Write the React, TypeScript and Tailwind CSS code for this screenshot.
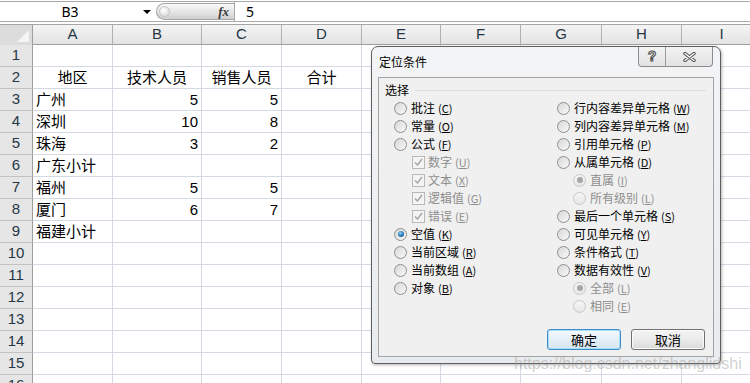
import React from "react";

const cols = [
  { key: "A", w: "w-[80px]" },
  { key: "B", w: "w-[89px]" },
  { key: "C", w: "w-[80px]" },
  { key: "D", w: "w-[80px]" },
  { key: "E", w: "w-[79px]" },
  { key: "F", w: "w-[80px]" },
  { key: "G", w: "w-[81px]" },
  { key: "H", w: "w-[80px]" },
  { key: "I", w: "w-[80px]" },
];

type Cell = { text: string; align: "left" | "center" | "right" };

const data: Record<number, (Cell | null)[]> = {
  2: [
    { text: "地区", align: "center" },
    { text: "技术人员", align: "center" },
    { text: "销售人员", align: "center" },
    { text: "合计", align: "center" },
  ],
  3: [{ text: "广州", align: "left" }, { text: "5", align: "right" }, { text: "5", align: "right" }],
  4: [{ text: "深圳", align: "left" }, { text: "10", align: "right" }, { text: "8", align: "right" }],
  5: [{ text: "珠海", align: "left" }, { text: "3", align: "right" }, { text: "2", align: "right" }],
  6: [{ text: "广东小计", align: "left" }],
  7: [{ text: "福州", align: "left" }, { text: "5", align: "right" }, { text: "5", align: "right" }],
  8: [{ text: "厦门", align: "left" }, { text: "6", align: "right" }, { text: "7", align: "right" }],
  9: [{ text: "福建小计", align: "left" }],
};

const rows = Array.from({ length: 16 }, (_, i) => i + 1);

function FormulaBar() {
  return (
    <div className="h-[24px] bg-white pt-[1px]">
      <div className="flex h-[21px] border-y border-[#a9a9a9] bg-white">
        <div className="relative flex w-[156px] items-center justify-center pr-[16px] text-[14px] text-black">
          B3
          <span className="absolute right-[5px] top-[8px] h-0 w-0 border-x-[4px] border-t-[4px] border-x-transparent border-t-black" />
        </div>
        <div className="mt-[1px] flex h-[17px] w-[78px] items-center justify-between rounded-l-full border border-r-0 border-[#a4a4a4] bg-[linear-gradient(#fafafa,#e4e4e4_55%,#cfcfcf)] pl-[2px] pr-[5px]">
          <span className="h-[11px] w-[11px] rounded-full border border-[#c4c4c4] bg-[radial-gradient(circle_at_40%_35%,#ffffff,#d2d2d2)]" />
          <span className="font-['Liberation_Serif'] text-[13px] font-bold italic text-[#3a3a3a]">fx</span>
        </div>
        <div className="flex flex-1 items-center border-l border-[#a9a9a9] pl-[11px] text-[14px] text-black">5</div>
      </div>
    </div>
  );
}

function Corner() {
  return (
    <div className="relative h-full w-[33px] shrink-0 border-r border-[#9e9e9e] bg-[#dcdcdc]">
      <svg className="absolute bottom-[3px] right-[3px]" width="12" height="12" viewBox="0 0 12 12">
        <polygon points="12,0 12,12 0,12" fill="#f4f4f4" />
      </svg>
    </div>
  );
}

function Sheet() {
  return (
    <div className="font-['Liberation_Sans','Noto_Sans_CJK_SC',sans-serif]">
      <div className="flex h-[21px] border-t border-[#a5a5a5]">
        <Corner />
        {cols.map((c) => (
          <div
            key={c.key}
            className={`${c.w} flex shrink-0 items-center justify-center border-r border-b border-r-[#b0b0b0] border-b-[#9e9e9e] bg-[linear-gradient(#f4f4f4,#e3e3e3)] text-[15px] text-[#253746]`}
          >
            {c.key}
          </div>
        ))}
      </div>
      {rows.map((r) => (
        <div key={r} className="flex h-[22px]">
          <div className="flex w-[33px] shrink-0 items-center justify-center border-r border-b border-r-[#9e9e9e] border-b-[#c2c2c2] bg-[#e6e6e6] text-[15px] text-[#253746]">
            {r}
          </div>
          {cols.map((c, i) => {
            const cell = data[r]?.[i];
            return (
              <div
                key={c.key}
                className={`${c.w} flex shrink-0 items-center border-r border-b border-[#d4d9e3] px-[3px] pt-[1px] text-[15px] text-black ${
                  cell?.align === "center" ? "justify-center" : cell?.align === "right" ? "justify-end" : "justify-start"
                }`}
              >
                {cell?.text}
              </div>
            );
          })}
        </div>
      ))}
    </div>
  );
}

function Radio({ checked, disabled }: { checked?: boolean; disabled?: boolean }) {
  return (
    <span
      className={`flex h-[13px] w-[13px] shrink-0 items-center justify-center rounded-full border ${
        disabled
          ? "border-[#c8c8c8] bg-[linear-gradient(#f6f6f6,#e6e6e6)]"
          : "border-[#8e8f8f] bg-[linear-gradient(135deg,#d8d8d8,#f8f8f8)]"
      }`}
    >
      {checked && (
        <span
          className={`h-[6px] w-[6px] rounded-full ${
            disabled ? "bg-[#a6a6a6]" : "bg-[radial-gradient(circle_at_40%_35%,#8fd0f5,#1b6fae_60%,#0f4d80)]"
          }`}
        />
      )}
    </span>
  );
}

function Check() {
  return (
    <span className="flex h-[13px] w-[13px] shrink-0 items-center justify-center border border-[#b9b9b9] bg-[#f4f4f4]">
      <svg width="9" height="9" viewBox="0 0 9 9">
        <path d="M1 4.5 L3.5 7 L8 1" fill="none" stroke="#a3a3a3" strokeWidth="1.4" />
      </svg>
    </span>
  );
}

function Label({ text, hot, disabled }: { text: string; hot: string; disabled?: boolean }) {
  return (
    <span className={`whitespace-nowrap text-[12px] ${disabled ? "text-[#8e8e8e]" : "text-black"}`}>
      {text}
      <span className="ml-[3px] text-[11px]">
        (<span className="underline">{hot}</span>)
      </span>
    </span>
  );
}

type Opt = { text: string; hot: string; kind: "radio" | "check" | "sub"; checked?: boolean };

const left: Opt[] = [
  { text: "批注", hot: "C", kind: "radio" },
  { text: "常量", hot: "O", kind: "radio" },
  { text: "公式", hot: "F", kind: "radio" },
  { text: "数字", hot: "U", kind: "check" },
  { text: "文本", hot: "X", kind: "check" },
  { text: "逻辑值", hot: "G", kind: "check" },
  { text: "错误", hot: "E", kind: "check" },
  { text: "空值", hot: "K", kind: "radio", checked: true },
  { text: "当前区域", hot: "R", kind: "radio" },
  { text: "当前数组", hot: "A", kind: "radio" },
  { text: "对象", hot: "B", kind: "radio" },
];

const right: Opt[] = [
  { text: "行内容差异单元格", hot: "W", kind: "radio" },
  { text: "列内容差异单元格", hot: "M", kind: "radio" },
  { text: "引用单元格", hot: "P", kind: "radio" },
  { text: "从属单元格", hot: "D", kind: "radio" },
  { text: "直属", hot: "I", kind: "sub", checked: true },
  { text: "所有级别", hot: "L", kind: "sub" },
  { text: "最后一个单元格", hot: "S", kind: "radio" },
  { text: "可见单元格", hot: "Y", kind: "radio" },
  { text: "条件格式", hot: "T", kind: "radio" },
  { text: "数据有效性", hot: "V", kind: "radio" },
  { text: "全部", hot: "L", kind: "sub", checked: true },
  { text: "相同", hot: "E", kind: "sub" },
];

function OptionRow({ o }: { o: Opt }) {
  if (o.kind === "check") {
    return (
      <div className="flex h-[18px] items-center gap-[3px] pl-[18px]">
        <Check />
        <Label text={o.text} hot={o.hot} disabled />
      </div>
    );
  }
  if (o.kind === "sub") {
    return (
      <div className="flex h-[18px] items-center gap-[4px] pl-[16px]">
        <Radio checked={o.checked} disabled />
        <Label text={o.text} hot={o.hot} disabled />
      </div>
    );
  }
  return (
    <div className="flex h-[18px] items-center gap-[4px]">
      <Radio checked={o.checked} />
      <Label text={o.text} hot={o.hot} />
    </div>
  );
}

function TitleButtons() {
  return (
    <div className="absolute right-[7px] top-0 flex h-[20px] w-[75px] rounded-b-[4px] border border-t-0 border-[#8c8c8c] bg-[linear-gradient(#f3f3f3,#e2e2e2)]">
      <div className="flex w-[27px] items-center justify-center border-r border-[#9a9a9a] font-['Liberation_Sans'] text-[14px] font-bold text-white [-webkit-text-stroke:1px_#4a4a4a]">
        ?
      </div>
      <div className="flex flex-1 items-center justify-center">
        <svg width="13" height="10" viewBox="0 0 13 10">
          <path d="M2 1.5 L11 8.5 M11 1.5 L2 8.5" stroke="#4f4f4f" strokeWidth="3.4" strokeLinecap="round" />
          <path d="M2 1.5 L11 8.5 M11 1.5 L2 8.5" stroke="#ffffff" strokeWidth="1.4" strokeLinecap="round" />
        </svg>
      </div>
    </div>
  );
}

function Dialog() {
  return (
    <div className="absolute left-[371px] top-[46px] flex h-[318px] w-[350px] flex-col rounded-t-[7px] rounded-b-[4px] border border-[#5f5f5f] bg-[linear-gradient(#f2f4f6,#e9ecef)] font-['Noto_Sans_CJK_SC',sans-serif] shadow-[1px_1px_3px_rgba(0,0,0,0.3)]">
      <div className="relative h-[30px] shrink-0">
        <span className="absolute left-[7px] top-[7px] text-[12px] leading-[16px] text-black">定位条件</span>
        <TitleButtons />
      </div>
      <div className="mx-[6px] mb-[6px] flex flex-1 flex-col border border-[#a3a3a3] bg-[#f0f0f0]">
        <div className="flex items-center gap-[6px] pl-[6px] pr-[7px] pt-[4px]">
          <span className="text-[12px] leading-[16px] text-black">选择</span>
          <span className="h-px flex-1 bg-[#d5dfe5]" />
        </div>
        <div className="mt-[1px] grid grid-cols-[163px_1fr] pl-[15px]">
          <div className="flex flex-col">
            {left.map((o) => (
              <OptionRow key={o.text} o={o} />
            ))}
          </div>
          <div className="flex flex-col">
            {right.map((o) => (
              <OptionRow key={o.text} o={o} />
            ))}
          </div>
        </div>
        <div className="flex-1" />
        <div className="flex justify-end gap-[10px] pb-[6px] pr-[8px]">
          <button className="h-[21px] w-[74px] rounded-[3px] border border-[#3c8ccc] bg-[linear-gradient(#f4fafd,#e4eff6_50%,#d6e6f0)] text-[13px] leading-none text-black shadow-[inset_0_0_0_1px_#a8dcf7]">
            确定
          </button>
          <button className="h-[21px] w-[74px] rounded-[3px] border border-[#707070] bg-[linear-gradient(#f3f3f3,#ebebeb_50%,#dadada)] text-[13px] leading-none text-black shadow-[inset_0_0_0_1px_#fbfbfb]">
            取消
          </button>
        </div>
      </div>
    </div>
  );
}

export default function App() {
  return (
    <div className="relative h-[383px] w-[750px] overflow-hidden bg-white">
      <FormulaBar />
      <Sheet />
      <Dialog />
      <span className="pointer-events-none absolute left-[514px] top-[354px] font-['Liberation_Sans'] text-[16px] leading-[20px] text-[rgba(150,150,150,0.45)]">
        https://blog.csdn.net/zhanglidshi
      </span>
    </div>
  );
}
